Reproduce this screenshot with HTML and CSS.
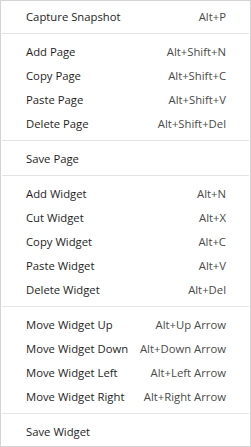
FILE: index.html
```html
<!DOCTYPE html>
<html>
<head>
<meta charset="utf-8">
<link rel="stylesheet" href="styles.css">
</head>
<body>
<div class="menu">
  <div class="item"><span class="label">Capture Snapshot</span><span class="key">Alt+P</span></div>
  <div class="sep"></div>
  <div class="item"><span class="label">Add Page</span><span class="key">Alt+Shift+N</span></div>
  <div class="item"><span class="label">Copy Page</span><span class="key">Alt+Shift+C</span></div>
  <div class="item"><span class="label">Paste Page</span><span class="key">Alt+Shift+V</span></div>
  <div class="item"><span class="label">Delete Page</span><span class="key">Alt+Shift+Del</span></div>
  <div class="sep"></div>
  <div class="item"><span class="label">Save Page</span><span class="key"></span></div>
  <div class="sep"></div>
  <div class="item"><span class="label">Add Widget</span><span class="key">Alt+N</span></div>
  <div class="item"><span class="label">Cut Widget</span><span class="key">Alt+X</span></div>
  <div class="item"><span class="label">Copy Widget</span><span class="key">Alt+C</span></div>
  <div class="item"><span class="label">Paste Widget</span><span class="key">Alt+V</span></div>
  <div class="item"><span class="label">Delete Widget</span><span class="key">Alt+Del</span></div>
  <div class="sep"></div>
  <div class="item"><span class="label">Move Widget Up</span><span class="key">Alt+Up Arrow</span></div>
  <div class="item"><span class="label">Move Widget Down</span><span class="key">Alt+Down Arrow</span></div>
  <div class="item"><span class="label">Move Widget Left</span><span class="key">Alt+Left Arrow</span></div>
  <div class="item"><span class="label">Move Widget Right</span><span class="key">Alt+Right Arrow</span></div>
  <div class="sep"></div>
  <div class="item"><span class="label">Save Widget</span><span class="key"></span></div>
</div>
</body>
</html>
```

FILE: styles.css
```css
html, body {
  margin: 0;
  padding: 0;
  background: #ffffff;
}
.menu {
  width: 251px;
  height: 447px;
  box-sizing: border-box;
  border: 1px solid #d4d4d4;
  background: #ffffff;
  padding: 3px 1px;
  font-family: "Open Sans", "Noto Sans", sans-serif;
  font-size: 11.3px;
  color: #1e1e1e;
}
.item {
  height: 24px;
  display: flex;
  align-items: center;
  justify-content: space-between;
  padding: 0 23px 0 24px;
  white-space: nowrap;
}
.key {
  color: #4a4a4a;
}
.sep {
  height: 1px;
  background: #e3e3e3;
  margin: 5px 0;
}
```
